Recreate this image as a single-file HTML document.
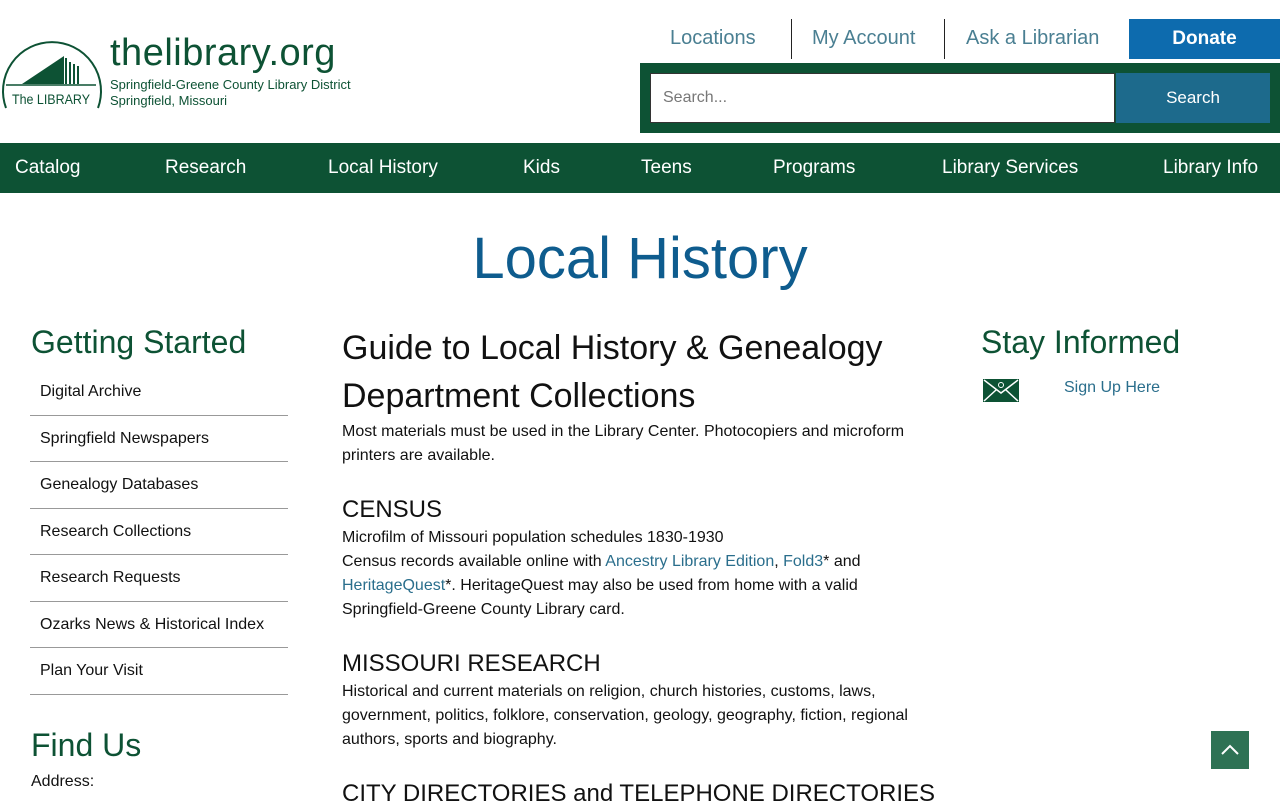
<!DOCTYPE html>
<html><head><meta charset="utf-8"><style>
body{margin:0;width:1280px;height:800px;overflow:hidden;font-family:"Liberation Sans",sans-serif;background:#fff;position:relative;color:#111}
.a{position:absolute}
.top a{color:#4a7f92;font-size:20px;text-decoration:none}
.nav{left:0;top:143px;width:1280px;height:50px;background:#0d5234}
.nav span{position:absolute;top:14px;color:#fff;font-size:19px}
.side{left:30px;width:258px}
.side div{height:46.5px;border-bottom:1px solid #999;font-size:16px;line-height:46px;padding-left:10px;box-sizing:border-box}
h2{margin:0;font-weight:normal}
.g{color:#0d5234;font-size:32px}
.m{left:342px;width:600px;font-size:16px;line-height:24px}
.m h3{font-weight:normal;font-size:24px;margin:0;line-height:32px}
.l{color:#2a6e8c}
</style></head><body>
<svg class="a" style="left:0;top:36px" width="104" height="76" viewBox="0 0 104 76">
<path d="M6 72 A49 49 0 1 1 98 72" fill="none" stroke="#0d5234" stroke-width="2"/>
<polygon points="22,48 64,20 64,48" fill="#0d5234"/>
<path d="M66 22v26M70 26v22M74 28v20M78 30v18" stroke="#0d5234" stroke-width="2"/>
<line x1="6" y1="49" x2="96" y2="49" stroke="#0d5234" stroke-width="1.5"/>
<text x="51" y="68" text-anchor="middle" font-size="14" fill="#0d5234" textLength="78" lengthAdjust="spacingAndGlyphs">The LIBRARY</text>
</svg>
<div class="a" style="left:110px;top:32px;font-size:38px;color:#0d5234;letter-spacing:0.5px">thelibrary.org</div>
<div class="a" style="left:110px;top:77px;font-size:13px;color:#0d5234;line-height:16px">Springfield-Greene County Library District<br>Springfield, Missouri</div>
<div class="a top" style="left:670px;top:27px"><a>Locations</a></div>
<div class="a" style="left:791px;top:19px;width:1px;height:40px;background:#222"></div>
<div class="a top" style="left:812px;top:27px"><a>My Account</a></div>
<div class="a" style="left:944px;top:19px;width:1px;height:40px;background:#222"></div>
<div class="a top" style="left:966px;top:27px"><a>Ask a Librarian</a></div>
<div class="a" style="left:1129px;top:19px;width:151px;height:40px;background:#0d6bae;color:#fff;font-weight:bold;font-size:19px;text-align:center;line-height:40px">Donate</div>
<div class="a" style="left:640px;top:63px;width:640px;height:70px;background:#0d5234"></div>
<div class="a" style="left:650px;top:73px;width:465px;height:50px;background:#fff;border:1px solid #333;color:#777;font-size:16px;line-height:48px;padding-left:12px;box-sizing:border-box">Search...</div>
<div class="a" style="left:1116px;top:73px;width:154px;height:50px;background:#1d6a8c;color:#fff;font-size:17px;text-align:center;line-height:50px">Search</div>
<div class="a nav"><span style="left:15px">Catalog</span><span style="left:165px">Research</span><span style="left:328px">Local History</span><span style="left:523px">Kids</span><span style="left:641px">Teens</span><span style="left:773px">Programs</span><span style="left:942px">Library Services</span><span style="left:1163px">Library Info</span></div>
<div class="a" style="left:0;width:1280px;top:225px;text-align:center;font-size:58px;color:#0e5c8e">Local History</div>
<h2 class="a g" style="left:31px;top:324px">Getting Started</h2>
<div class="a side" style="top:369px"><div>Digital Archive</div><div>Springfield Newspapers</div><div>Genealogy Databases</div><div>Research Collections</div><div>Research Requests</div><div>Ozarks News &amp; Historical Index</div><div>Plan Your Visit</div></div>
<h2 class="a g" style="left:31px;top:727px">Find Us</h2>
<div class="a" style="left:31px;top:773px;font-size:16px">Address:</div>
<div class="a m" style="top:324px">
<div style="font-size:34px;line-height:48px">Guide to Local History &amp; Genealogy Department Collections</div>
Most materials must be used in the Library Center. Photocopiers and microform printers are available.
<h3 style="margin-top:26px">CENSUS</h3>
Microfilm of Missouri population schedules 1830-1930<br>Census records available online with <span class="l">Ancestry Library Edition</span>, <span class="l">Fold3</span>* and <span class="l">HeritageQuest</span>*. HeritageQuest may also be used from home with a valid Springfield-Greene County Library card.
<h3 style="margin-top:26px">MISSOURI RESEARCH</h3>
Historical and current materials on religion, church histories, customs, laws, government, politics, folklore, conservation, geology, geography, fiction, regional authors, sports and biography.
<h3 style="margin-top:26px">CITY DIRECTORIES and TELEPHONE DIRECTORIES</h3>
</div>
<h2 class="a g" style="left:981px;top:324px">Stay Informed</h2>
<svg class="a" style="left:983px;top:379px" width="36" height="23"><rect width="36" height="23" fill="#0d5234"/><path d="M1 1L18 14L35 1M1 22L13 11M35 22L23 11" stroke="#fff" stroke-width="1.5" fill="none"/><circle cx="18" cy="6" r="2.5" fill="none" stroke="#fff"/></svg>
<div class="a l" style="left:1064px;top:379px;font-size:16px">Sign Up Here</div>
<div class="a" style="left:1211px;top:731px;width:38px;height:38px;background:#2e7254"><svg width="38" height="38"><path d="M11 23L19 15L27 23" stroke="#fff" stroke-width="2" fill="none"/></svg></div>
</body></html>
